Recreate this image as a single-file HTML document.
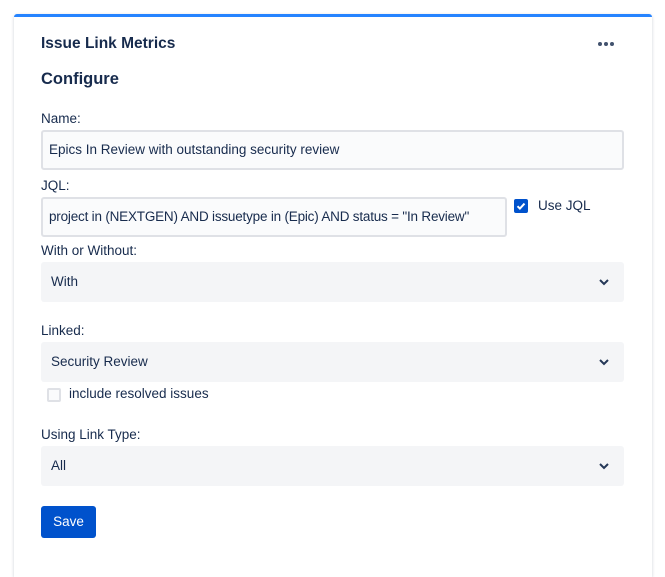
<!DOCTYPE html>
<html><head><meta charset="utf-8"><style>
body{margin:0;background:#fff;width:665px;height:560px;overflow:hidden;font-family:"Liberation Sans",sans-serif;color:#172B4D;}
.card{position:absolute;left:14px;top:14px;width:638px;height:560px;background:#fff;border-top:3px solid #2684FF;border-radius:3px 3px 0 0;box-shadow:0 1px 3px rgba(9,30,66,.2);}
.a{position:absolute;font-size:13.5px;white-space:nowrap;}
.inp{position:absolute;left:41px;background:#FAFBFC;border:2px solid #DFE1E6;border-radius:3px;box-sizing:border-box;}
.sel{position:absolute;left:41px;width:583px;height:40px;background:#F4F5F7;border-radius:3px;}
.chev{position:absolute;right:14px;top:14px;}
</style></head><body>
<div class="card"></div>
<div class="a" style="left:41px;top:35px;font-size:15.5px;font-weight:bold;">Issue Link Metrics</div>
<div style="position:absolute;left:598px;top:42px;">
<span style="position:absolute;left:0;width:4px;height:4px;border-radius:2px;background:#42526E"></span>
<span style="position:absolute;left:6px;width:4px;height:4px;border-radius:2px;background:#42526E"></span>
<span style="position:absolute;left:12px;width:4px;height:4px;border-radius:2px;background:#42526E"></span></div>
<div class="a" style="left:41px;top:70px;font-size:16.5px;font-weight:bold;">Configure</div>
<div class="a" style="left:41px;top:111px;">Name:</div>
<div class="inp" style="top:130px;width:583px;height:40px;"></div>
<div class="a" style="left:49px;top:142px;">Epics In Review with outstanding security review</div>
<div class="a" style="left:41px;top:178px;">JQL:</div>
<div class="inp" style="top:197px;width:466px;height:40px;"></div>
<div class="a" style="left:49px;top:209px;letter-spacing:-0.2px;">project in (NEXTGEN) AND issuetype in (Epic) AND status = "In Review"</div>
<div style="position:absolute;left:514px;top:199px;width:14px;height:14px;background:#0052CC;border-radius:2px;">
<svg width="14" height="14" viewBox="0 0 14 14"><path d="M3.5 7.2l2.4 2.4 4.6-5" stroke="#fff" stroke-width="2" fill="none"/></svg></div>
<div class="a" style="left:538px;top:198px;">Use JQL</div>
<div class="a" style="left:41px;top:243px;">With or Without:</div>
<div class="sel" style="top:262px;"><div class="a" style="left:10px;top:12px;">With</div><svg class="chev" width="12" height="12" viewBox="0 0 12 12"><path d="M2 4l4 4 4-4" stroke="#253858" stroke-width="2" fill="none"/></svg></div>
<div class="a" style="left:41px;top:323px;">Linked:</div>
<div class="sel" style="top:342px;"><div class="a" style="left:10px;top:12px;">Security Review</div><svg class="chev" width="12" height="12" viewBox="0 0 12 12"><path d="M2 4l4 4 4-4" stroke="#253858" stroke-width="2" fill="none"/></svg></div>
<div style="position:absolute;left:47px;top:388px;width:10px;height:10px;border:2px solid #DFE1E6;border-radius:2px;background:#FAFBFC"></div>
<div class="a" style="left:69px;top:386px;">include resolved issues</div>
<div class="a" style="left:41px;top:427px;">Using Link Type:</div>
<div class="sel" style="top:446px;"><div class="a" style="left:10px;top:12px;">All</div><svg class="chev" width="12" height="12" viewBox="0 0 12 12"><path d="M2 4l4 4 4-4" stroke="#253858" stroke-width="2" fill="none"/></svg></div>
<div style="position:absolute;left:41px;top:506px;width:55px;height:32px;background:#0052CC;border-radius:3px;color:#fff;font-size:13.5px;line-height:32px;text-align:center;">Save</div>
</body></html>
